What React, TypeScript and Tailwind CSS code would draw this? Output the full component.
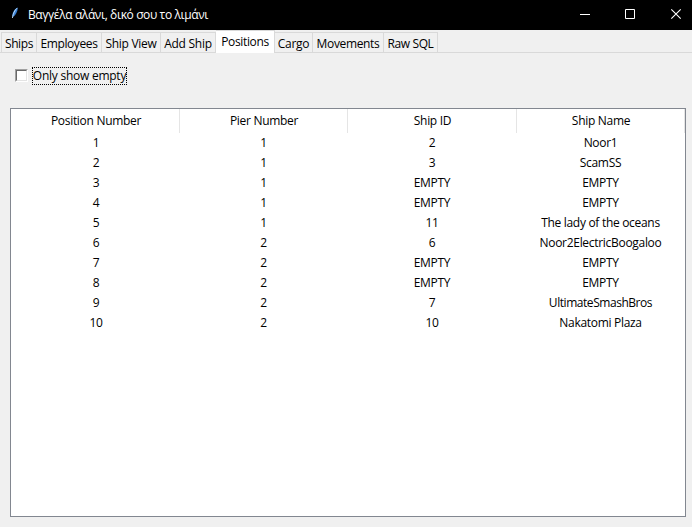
import React from "react";

type Tab = { label: string; width: string; tracking: string; active?: boolean };

const tabs: Tab[] = [
  { label: "Ships", width: "w-[36px]", tracking: "tracking-[-0.4px]" },
  { label: "Employees", width: "w-[65px]", tracking: "tracking-[-0.4px]" },
  { label: "Ship View", width: "w-[59px]", tracking: "tracking-[-0.3px]" },
  { label: "Add Ship", width: "w-[55px]", tracking: "tracking-[-0.25px]" },
  { label: "Positions", width: "w-[59px]", tracking: "tracking-[-0.35px]", active: true },
  { label: "Cargo", width: "w-[38px]", tracking: "tracking-[-0.3px]" },
  { label: "Movements", width: "w-[71px]", tracking: "tracking-[-0.35px]" },
  { label: "Raw SQL", width: "w-[54px]", tracking: "tracking-[-0.4px]" },
];

const headers = ["Position Number", "Pier Number", "Ship ID", "Ship Name"];

const rows: string[][] = [
  ["1", "1", "2", "Noor1"],
  ["2", "1", "3", "ScamSS"],
  ["3", "1", "EMPTY", "EMPTY"],
  ["4", "1", "EMPTY", "EMPTY"],
  ["5", "1", "11", "The lady of the oceans"],
  ["6", "2", "6", "Noor2ElectricBoogaloo"],
  ["7", "2", "EMPTY", "EMPTY"],
  ["8", "2", "EMPTY", "EMPTY"],
  ["9", "2", "7", "UltimateSmashBros"],
  ["10", "2", "10", "Nakatomi Plaza"],
];

function TitleBar() {
  return (
    <header className="flex h-[30px] items-center bg-black text-white">
      <svg className="mb-[5px] ml-[11px] h-[12px] w-[8px] shrink-0" viewBox="0 0 8 12" fill="none">
        <path d="M6.8 0.5C4 1.5 1.3 5 1.2 9.3l1 0.5C4.8 8 6.6 4.5 6.8 0.5Z" fill="#3b82d6" />
        <path d="M6 1.2C3.5 3.5 2.4 6 1.4 11" stroke="#c4e2fa" strokeWidth="0.9" />
      </svg>
      <span className="ml-[9px] whitespace-nowrap tracking-[-0.38px]">Βαγγέλα αλάνι, δικό σου το λιμάνι</span>
      <svg className="ml-auto h-[30px] w-[132px] shrink-0" viewBox="0 0 132 30" fill="none" stroke="#fff">
        <path d="M20 14.5h10" />
        <path d="M65.5 9.5h9v9h-9z" />
        <path d="M111.3 9.3l9.4 9.4M120.7 9.3l-9.4 9.4" strokeWidth="1.1" />
      </svg>
    </header>
  );
}

function TabStrip() {
  return (
    <nav className="flex h-[23px] items-end border-b border-[#d9d9d9] pl-px">
      {tabs.map((tab, i) =>
        tab.active ? (
          <div
            key={tab.label}
            className={`z-10 -mb-px flex h-[23px] items-center justify-center border-t border-r border-[#d9d9d9] bg-white ${tab.width}`}
          >
            <span className={`whitespace-nowrap ${tab.tracking}`}>{tab.label}</span>
          </div>
        ) : (
          <div
            key={tab.label}
            className={`flex h-[20px] items-center justify-center border-t border-r border-[#d9d9d9] pt-[2px] ${i === 0 ? "border-l" : ""} ${tab.width}`}
          >
            <span className={`whitespace-nowrap ${tab.tracking}`}>{tab.label}</span>
          </div>
        ),
      )}
    </nav>
  );
}

export default function App() {
  return (
    <div className="flex h-[528px] w-[692px] flex-col overflow-hidden border-b border-white bg-[#f0f0f0] font-['Open_Sans','Noto_Sans',sans-serif] text-[12px] leading-[16px] text-black">
      <TitleBar />
      <TabStrip />
      <label className="mt-[14px] ml-[15px] flex h-[18px] items-center">
        <span className="mb-px h-[13px] w-[13px] border border-t-[#a0a0a0] border-r-white border-b-white border-l-[#a0a0a0]">
          <span className="block h-full w-full border border-t-[#696969] border-r-[#e3e3e3] border-b-[#e3e3e3] border-l-[#696969] bg-white" />
        </span>
        <span className="ml-[4px] flex h-[18px] w-[95px] items-center justify-center border border-dotted border-black">
          <span className="whitespace-nowrap tracking-[-0.25px]">Only show empty</span>
        </span>
      </label>
      <main className="mt-[23px] ml-[10px] h-[409px] w-[676px] border border-[#828790] bg-white">
        <div className="grid grid-cols-[169px_168px_169px_168px]">
          {headers.map((h, c) => (
            <div
              key={h}
              className={`flex h-[24px] items-center justify-center border-r border-[#e5e5e5] tracking-[-0.3px] ${c === 0 ? "pl-[2px]" : "pl-px"}`}
            >
              {h}
            </div>
          ))}
          {rows.map((row) =>
            row.map((cell, c) => (
              <div
                key={`${row[0]}-${c}`}
                className={`flex h-[20px] items-center justify-center ${c === 0 ? "pl-px" : "pr-px"} ${cell.startsWith("Ultimate") ? "tracking-[-0.45px]" : "tracking-[-0.3px]"}`}
              >
                {cell}
              </div>
            )),
          )}
        </div>
      </main>
    </div>
  );
}
